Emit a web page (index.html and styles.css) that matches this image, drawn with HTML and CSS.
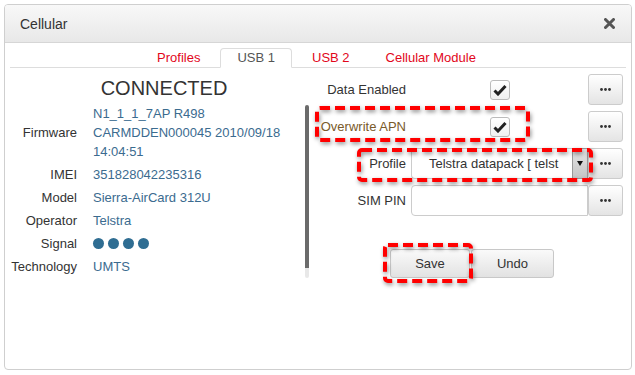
FILE: index.html
```html
<!DOCTYPE html>
<html lang="en">
<head>
  <meta charset="UTF-8" />
  <title>Cellular</title>
  <link rel="stylesheet" href="styles.css">
</head>
<body>
  <div class="dialog">
    <div class="dialog-header">
      <span class="dialog-title">Cellular</span>
      <span class="close">
        <svg width="11" height="11" viewBox="0 0 11 11"><path d="M1.5 1.5 L9.5 9.5 M9.5 1.5 L1.5 9.5" stroke="#555" stroke-width="3" stroke-linecap="round"/></svg>
      </span>
    </div>

    <ul class="tabs">
      <li><a>Profiles</a></li>
      <li class="active"><a>USB 1</a></li>
      <li><a>USB 2</a></li>
      <li><a>Cellular Module</a></li>
    </ul>

    <div class="tab-body">
      <div class="status">
        <h2>CONNECTED</h2>
        <div class="info">
          <span class="lbl">Firmware</span>
          <span class="val">N1_1_1_7AP R498<br>CARMDDEN000045 2010/09/18<br>14:04:51</span>
          <span class="lbl">IMEI</span>
          <span class="val">351828042235316</span>
          <span class="lbl">Model</span>
          <span class="val">Sierra-AirCard 312U</span>
          <span class="lbl">Operator</span>
          <span class="val">Telstra</span>
          <span class="lbl">Signal</span>
          <span class="val signal"><i></i><i></i><i></i><i></i></span>
          <span class="lbl">Technology</span>
          <span class="val">UMTS</span>
        </div>
      </div>

      <div class="scroll"></div>

      <div class="settings">
        <div class="form">
          <label>Data Enabled</label>
          <span class="check"><svg width="14" height="12" viewBox="0 0 14 12"><path d="M1.5 6.5 L5 10 L12.5 2" fill="none" stroke="#222" stroke-width="3"/></svg></span>
          <button class="more"><svg width="11" height="3"><circle cx="1.5" cy="1.5" r="1.4"/><circle cx="5.5" cy="1.5" r="1.4"/><circle cx="9.5" cy="1.5" r="1.4"/></svg></button>

          <label class="warn">Overwrite APN</label>
          <span class="check"><svg width="14" height="12" viewBox="0 0 14 12"><path d="M1.5 6.5 L5 10 L12.5 2" fill="none" stroke="#222" stroke-width="3"/></svg></span>
          <button class="more"><svg width="11" height="3"><circle cx="1.5" cy="1.5" r="1.4"/><circle cx="5.5" cy="1.5" r="1.4"/><circle cx="9.5" cy="1.5" r="1.4"/></svg></button>

          <label>Profile</label>
          <div class="select">
            <span class="select-text">Telstra datapack [ telst</span>
            <span class="select-arrow"></span>
          </div>
          <button class="more"><svg width="11" height="3"><circle cx="1.5" cy="1.5" r="1.4"/><circle cx="5.5" cy="1.5" r="1.4"/><circle cx="9.5" cy="1.5" r="1.4"/></svg></button>

          <label>SIM PIN</label>
          <input type="text" class="pin" />
          <button class="more"><svg width="11" height="3"><circle cx="1.5" cy="1.5" r="1.4"/><circle cx="5.5" cy="1.5" r="1.4"/><circle cx="9.5" cy="1.5" r="1.4"/></svg></button>
        </div>

        <div class="actions">
          <button class="btn save">Save</button>
          <button class="btn undo">Undo</button>
        </div>

        <!-- highlight marks -->
        <svg class="mark mark-apn" width="215" height="36"><rect x="2" y="2" width="211" height="32" rx="3"/></svg>
        <svg class="mark mark-profile" width="236" height="34"><rect x="2" y="2" width="232" height="30" rx="3"/></svg>
        <svg class="mark mark-save" width="90" height="40"><rect x="2" y="2" width="86" height="36" rx="3"/></svg>
      </div>
    </div>
  </div>
</body>
</html>
```

FILE: styles.css
```css
body {
  margin: 0;
  background: #fff;
  font-family: "Liberation Sans", Arial, sans-serif;
  font-size: 13px;
  color: #333;
}
.dialog {
  box-sizing: border-box;
  margin: 4px;
  width: 628px;
  height: 366px;
  border: 1px solid #cfcfcf;
  border-radius: 4px;
  overflow: hidden;
}
.dialog-header {
  box-sizing: border-box;
  height: 38px;
  display: flex;
  align-items: center;
  justify-content: space-between;
  padding: 0 15px 0 15px;
  background: linear-gradient(#f8f8f8, #e8e8e8);
  border-bottom: 1px solid #d6d6d6;
}
.dialog-title {
  font-size: 14px;
  color: #333;
}
.close {
  display: flex;
  margin-right: 1px;
}
.tabs {
  display: flex;
  justify-content: center;
  list-style: none;
  margin: 5px 5px 0;
  padding: 0 3px 0 0;
  border-bottom: 1px solid #ddd;
}
.tabs li {
  margin: 0 2px -1px;
}
.tabs a {
  display: block;
  padding: 0 15px;
  line-height: 18px;
  border: 1px solid transparent;
  border-radius: 4px 4px 0 0;
  color: #e2061b;
}
.tabs .active a {
  padding: 0 16px;
  color: #555;
  background: #fff;
  border-color: #ddd #ddd transparent;
}
.tab-body {
  display: flex;
  padding-right: 4px;
}
.status {
  width: 300px;
  padding-top: 8px;
}
.status h2 {
  margin: 0 0 2px;
  padding-left: 18px;
  font-size: 20px;
  font-weight: normal;
  line-height: 24px;
  text-align: center;
  color: #333;
}
.info {
  display: grid;
  grid-template-columns: 72px auto;
  column-gap: 16px;
}
.lbl, .val {
  padding: 2px 0;
  line-height: 19px;
}
.lbl {
  text-align: right;
  align-self: center;
  color: #333;
}
.val {
  color: #3b6b8f;
}
.signal {
  display: flex;
  align-items: center;
  gap: 4px;
}
.signal i {
  width: 11px;
  height: 11px;
  border-radius: 50%;
  background: #2f6d92;
}
.scroll {
  width: 4px;
  height: 173px;
  margin-top: 37px;
  border-radius: 2px;
  background: linear-gradient(#6b6b6b 163px, #e8e8e8 163px);
}
.settings {
  position: relative;
  flex: 1;
  padding-top: 6px;
}
.form {
  display: grid;
  grid-template-columns: 1fr 177px 35px;
  grid-auto-rows: 31px;
  row-gap: 6px;
  padding-right: 4px;
  align-items: center;
}
.form label {
  text-align: right;
  padding-right: 5px;
  color: #333;
}
.form label.warn {
  color: #7a5a2a;
}
.check {
  justify-self: center;
  box-sizing: border-box;
  width: 20px;
  height: 20px;
  display: flex;
  align-items: center;
  justify-content: center;
  border: 1px solid #bbb;
  border-radius: 3px;
  background: linear-gradient(#fff, #f0f0f0);
}
.more {
  box-sizing: border-box;
  height: 31px;
  width: 35px;
  padding: 0;
  display: flex;
  align-items: center;
  justify-content: center;
  border: 1px solid #ccc;
  border-radius: 3px;
  background: linear-gradient(#fff, #e4e4e4);
  fill: #333;
}
.select {
  display: flex;
  height: 31px;
}
.select-text {
  flex: 1;
  box-sizing: border-box;
  padding-left: 17px;
  line-height: 29px;
  font-size: 13px;
  border: 1px solid #ccc;
  border-right: none;
  border-radius: 4px 0 0 4px;
  color: #333;
}
.select-arrow {
  width: 16px;
  box-sizing: border-box;
  border: 1px solid #999;
  background: linear-gradient(#e6e6e6, #c4c4c4);
  position: relative;
}
.select-arrow::after {
  content: "";
  position: absolute;
  left: 3.5px;
  top: 12px;
  border-left: 3.5px solid transparent;
  border-right: 3.5px solid transparent;
  border-top: 5px solid #111;
}
.pin {
  box-sizing: border-box;
  height: 31px;
  width: 177px;
  margin: 0;
  border: 1px solid #ccc;
  border-radius: 4px 0 0 4px;
}
.actions {
  display: flex;
  margin-top: 33px;
  padding-left: 81px;
}
.btn {
  box-sizing: border-box;
  height: 29px;
  font-family: "Liberation Sans", Arial, sans-serif;
  font-size: 13px;
  color: #333;
  border: 1px solid #c8c8c8;
  border-radius: 3px;
  background: linear-gradient(#fafafa, #e2e2e2);
}
.save {
  width: 80px;
}
.undo {
  width: 83px;
  margin-left: 1px;
}
.mark {
  position: absolute;
  overflow: visible;
  filter: drop-shadow(1px 2px 2px rgba(0, 0, 0, 0.45));
}
.mark rect {
  fill: none;
  stroke: #ff0000;
  stroke-width: 4;
  stroke-dasharray: 10 5;
}
.mark-apn {
  left: 6px;
  top: 38px;
}
.mark-profile {
  left: 48px;
  top: 80px;
}
.mark-save {
  left: 74px;
  top: 175px;
}
```
